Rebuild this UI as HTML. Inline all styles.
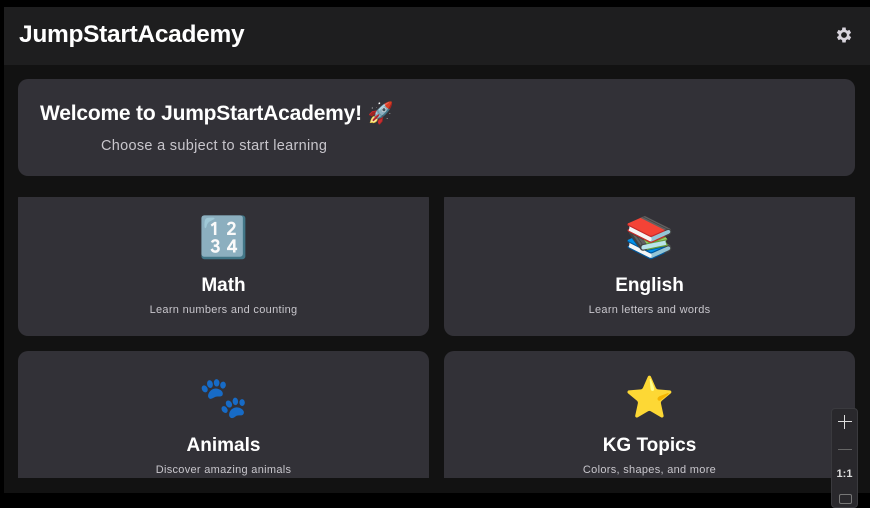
<!DOCTYPE html>
<html><head><meta charset="utf-8"><style>
*{margin:0;padding:0;box-sizing:border-box}
body{width:870px;height:501px;background:#000;font-family:"Liberation Sans","Noto Sans CJK SC",sans-serif;position:relative;overflow:hidden}
.frame{position:absolute;left:4px;top:7px;width:866px;height:486px;background:#121212;overflow:hidden}
.hdr{position:absolute;left:0;top:0;width:100%;height:58px;background:#1e1e1f}
.hdr h1{position:absolute;left:15px;top:14px;color:#fff;font-size:24.5px;font-weight:bold;letter-spacing:-0.3px}
.gear{position:absolute;left:830px;top:18px}
.wel{position:absolute;left:14px;top:72px;width:837px;height:97px;background:#323137;border-radius:10px}
.wel .t{position:absolute;left:22px;top:23px;color:#fff;font-size:21px;font-weight:bold;letter-spacing:-0.2px}
.wel .s{position:absolute;left:83px;top:59px;color:#c8c6cc;font-size:14.5px;letter-spacing:0.3px}
.scroll{position:absolute;left:0;top:190px;width:100%;height:281px;overflow:hidden}
.card{position:absolute;width:411px;background:#323137;border-radius:10px;text-align:center;color:#fff}
.card .ic{position:absolute;left:0;width:100%;font-size:40px;line-height:48px}
.card .n{position:absolute;left:0;width:100%;font-size:19px;font-weight:bold}
.card .d{position:absolute;left:0;width:100%;font-size:11px;color:#c8c6cc;letter-spacing:0.3px}
.zc{position:absolute;left:831px;top:408px;width:27px;height:100px;background:#29282c;border:1px solid #3a3a3e;border-radius:4px;color:#ddd}
</style></head><body>
<div class="frame">
 <div class="hdr"><h1>JumpStartAcademy</h1>
  <svg class="gear" width="20" height="20" viewBox="0 0 24 24"><path fill="#d8d4dc" d="M19.4 13a7.6 7.6 0 0 0 0-2l2.1-1.6-2-3.5-2.5 1a7.3 7.3 0 0 0-1.7-1L15 3h-4l-.4 2.9a7.3 7.3 0 0 0-1.7 1l-2.5-1-2 3.5L6.6 11a7.6 7.6 0 0 0 0 2l-2.1 1.6 2 3.5 2.5-1a7.3 7.3 0 0 0 1.7 1L11 21h4l.4-2.9a7.3 7.3 0 0 0 1.7-1l2.5 1 2-3.5zM13 15.5a3.5 3.5 0 1 1 0-7 3.5 3.5 0 0 1 0 7z" transform="translate(-1 0)"/></svg>
 </div>
 <div class="wel"><div class="t">Welcome to JumpStartAcademy! 🚀</div><div class="s">Choose a subject to start learning</div></div>
 <div class="scroll">
  <div class="card" style="left:14px;top:-8px;height:147px"><div class="ic" style="top:25px">🔢</div><div class="n" style="top:86px">Math</div><div class="d" style="top:115px">Learn numbers and counting</div></div>
  <div class="card" style="left:440px;top:-8px;height:147px"><div class="ic" style="top:25px">📚</div><div class="n" style="top:86px">English</div><div class="d" style="top:115px">Learn letters and words</div></div>
  <div class="card" style="left:14px;top:154px;height:147px"><div class="ic" style="top:23px">🐾</div><div class="n" style="top:84px">Animals</div><div class="d" style="top:113px">Discover amazing animals</div></div>
  <div class="card" style="left:440px;top:154px;height:147px"><div class="ic" style="top:23px">⭐</div><div class="n" style="top:84px">KG Topics</div><div class="d" style="top:113px">Colors, shapes, and more</div></div>
 </div>
</div>
<div class="zc">
 <div style="position:absolute;left:6px;top:6px;width:14px;height:14px"><div style="position:absolute;left:6px;top:0;width:1px;height:14px;background:#ddd"></div><div style="position:absolute;left:0;top:6px;width:14px;height:1px;background:#ddd"></div></div>
 <div style="position:absolute;left:6px;top:40px;width:14px;height:1px;background:#666"></div>
 <div style="position:absolute;left:0;top:59px;width:100%;text-align:center;font-size:11px;font-weight:bold">1:1</div>
 <div style="position:absolute;left:7px;top:85px;width:13px;height:10px;border:1px solid #777;border-radius:2px"></div>
</div>
</body></html>
